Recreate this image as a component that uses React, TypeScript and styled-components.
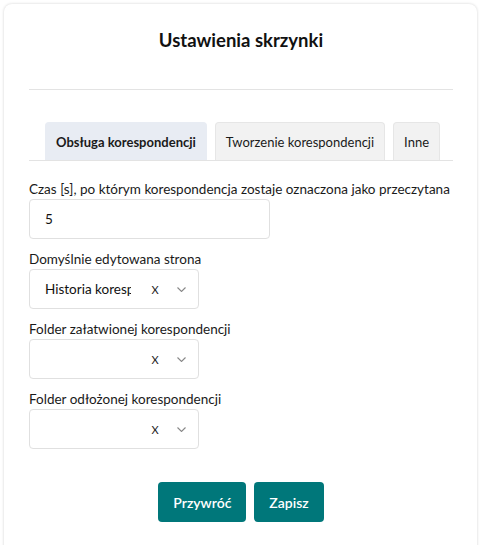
import * as React from "react";
import styled, { createGlobalStyle } from "styled-components";

const GlobalStyle = createGlobalStyle`
    html, body {
        margin: 0;
        padding: 0;
        background: #ffffff;
    }
    body {
        font-family: Lato, "Open Sans", sans-serif;
        color: #1c1c1c;
    }
`;

const Card = styled.div`
    margin: 4px 5px 0 4px;
    height: 560px;
    box-sizing: border-box;
    background: #fff;
    border-radius: 8px;
    box-shadow: 0 0 3px rgba(0, 0, 0, 0.18);
    padding: 0 24px 0 25px;
    display: flex;
    flex-direction: column;
`;

const Title = styled.h2`
    margin: 0;
    height: 72px;
    display: flex;
    align-items: center;
    justify-content: center;
    font-size: 18.5px;
    font-weight: 700;
    color: #111;
    border-bottom: 1px solid #e3e3e3;
    padding-bottom: 13px;
`;

const TabBar = styled.div`
    display: flex;
    gap: 8px;
    margin-top: 32px;
    padding-left: 16px;
    border-bottom: 1px solid #e3e3e3;
`;

const Tab = styled.div<{ $active?: boolean }>`
    height: 37px;
    padding: 0 10px;
    display: flex;
    align-items: center;
    white-space: nowrap;
    font-size: 13px;
    font-weight: ${p => (p.$active ? 700 : 400)};
    color: #1a1a1a;
    background: ${p => (p.$active ? "#e8ecf3" : "#f2f2f2")};
    border: 1px solid ${p => (p.$active ? "#e8ecf3" : "#e6e6e6")};
    border-bottom: none;
    border-radius: 4px 4px 0 0;
`;

const Field = styled.div<{ $first?: boolean }>`
    display: flex;
    flex-direction: column;
    margin-top: ${p => (p.$first ? "18px" : "10px")};
`;

const Label = styled.label`
    font-size: 13.5px;
    line-height: 20px;
    white-space: nowrap;
    color: #1a1a1a;
`;

const Input = styled.div`
    width: 241px;
    height: 40px;
    box-sizing: border-box;
    border: 1px solid #e0e0e0;
    border-radius: 4px;
    padding: 0 15px;
    display: flex;
    align-items: center;
    font-size: 13.5px;
    color: #111;
`;

const Select = styled.div`
    width: 170px;
    height: 40px;
    box-sizing: border-box;
    border: 1px solid #e0e0e0;
    border-radius: 4px;
    padding-left: 15px;
    display: grid;
    grid-template-columns: 86px 34px 1fr;
    align-items: center;
    font-size: 13.5px;
    color: #111;
`;

const SelectValue = styled.span`
    overflow: hidden;
    white-space: nowrap;
`;

const Clear = styled.span`
    font-size: 11px;
    text-align: center;
    padding-left: 14px;
    color: #222;
`;

const Chevron = styled.span`
    display: flex;
    align-items: center;
    justify-content: center;
`;

const Actions = styled.div`
    display: flex;
    justify-content: center;
    gap: 8px;
    margin-top: 33px;
`;

const Button = styled.button`
    height: 40px;
    padding: 0 15px;
    border: none;
    border-radius: 4px;
    background: #00777a;
    color: #fff;
    font-family: Lato, sans-serif;
    font-size: 14px;
    font-weight: 600;
`;

const ChevronIcon = () => (
    <svg width="9" height="5" viewBox="0 0 9 5" fill="none">
        <path d="M0.5 0.5l4 4 4-4" stroke="#888" strokeWidth="1.1" />
    </svg>
);

const SelectBox: React.FC<{ value?: string }> = ({ value }) => (
    <Select>
        <SelectValue>{value || ""}</SelectValue>
        <Clear>X</Clear>
        <Chevron><ChevronIcon /></Chevron>
    </Select>
);

export default function App() {
    return <>
        <GlobalStyle />
        <Card>
            <Title>Ustawienia skrzynki</Title>
            <TabBar>
                <Tab $active>Obsługa korespondencji</Tab>
                <Tab>Tworzenie korespondencji</Tab>
                <Tab>Inne</Tab>
            </TabBar>
            <Field $first>
                <Label>Czas [s], po którym korespondencja zostaje oznaczona jako przeczytana</Label>
                <Input>5</Input>
            </Field>
            <Field>
                <Label>Domyślnie edytowana strona</Label>
                <SelectBox value="Historia korespondencji" />
            </Field>
            <Field>
                <Label>Folder załatwionej korespondencji</Label>
                <SelectBox />
            </Field>
            <Field>
                <Label>Folder odłożonej korespondencji</Label>
                <SelectBox />
            </Field>
            <Actions>
                <Button>Przywróć</Button>
                <Button>Zapisz</Button>
            </Actions>
        </Card>
    </>;
}
